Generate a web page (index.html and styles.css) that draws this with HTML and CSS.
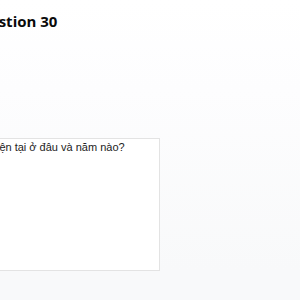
FILE: index.html
```html
<!DOCTYPE html>
<html lang="vi">
<head>
<meta charset="utf-8">
<link rel="stylesheet" href="styles.css">
</head>
<body>
<main class="card">
  <h2 class="title">Question 30</h2>
  <div class="answer">
    <div class="field">Hiện tại ở đâu và năm nào?</div>
  </div>
</main>
</body>
</html>
```
FILE: styles.css
```css
html, body {
  margin: 0;
  height: 100%;
}
body {
  background: linear-gradient(#ffffff 0%, #fdfdfe 30%, #f8f9fa 90%, #f8f9fa 100%);
  overflow: hidden;
}
.card {
  display: flex;
  flex-direction: column;
  padding-top: 11px;
}
.title {
  margin: 0 0 0 -32px;
  font-family: "Open Sans", sans-serif;
  font-weight: 700;
  font-size: 15px;
  line-height: 20px;
  color: #0a0a0a;
}
.answer {
  margin-top: 107px;
  margin-left: -18px;
}
.field {
  width: 164px;
  height: 129px;
  padding: 2px 6px 0;
  box-sizing: content-box;
  background: #fff;
  border: 1px solid #e3e3e3;
  font-family: "Liberation Sans", Arial, sans-serif;
  font-size: 11px;
  line-height: 13px;
  color: #222;
}
```
